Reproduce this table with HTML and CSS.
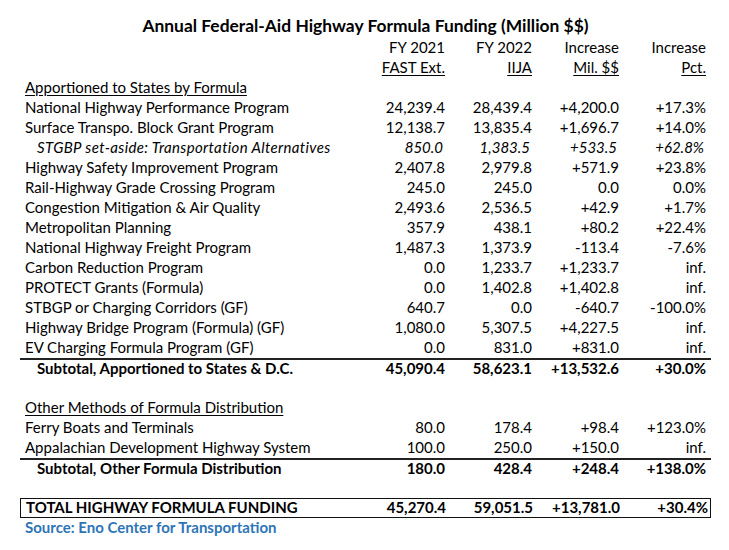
FILE: index.html
```html
<!DOCTYPE html>
<html>
<head>
<meta charset="utf-8">
<link rel="stylesheet" href="styles.css">
</head>
<body>
<div class="sheet">
  <div class="title">Annual Federal-Aid Highway Formula Funding (Million $$)</div>
  <div class="row head"><span></span><span>FY 2021</span><span>FY 2022</span><span>Increase</span><span>Increase</span></div>
  <div class="row head"><span></span><span class="u">FAST Ext.</span><span class="u">IIJA</span><span class="u">Mil. $$</span><span class="u">Pct.</span></div>
  <div class="row"><span class="lbl u">Apportioned to States by Formula</span></div>
  <div class="row"><span class="lbl">National Highway Performance Program</span><span>24,239.4</span><span>28,439.4</span><span>+4,200.0</span><span>+17.3%</span></div>
  <div class="row"><span class="lbl">Surface Transpo. Block Grant Program</span><span>12,138.7</span><span>13,835.4</span><span>+1,696.7</span><span>+14.0%</span></div>
  <div class="row ital"><span class="lbl ind">STGBP set-aside: Transportation Alternatives</span><span>850.0</span><span>1,383.5</span><span>+533.5</span><span>+62.8%</span></div>
  <div class="row"><span class="lbl">Highway Safety Improvement Program</span><span>2,407.8</span><span>2,979.8</span><span>+571.9</span><span>+23.8%</span></div>
  <div class="row"><span class="lbl">Rail-Highway Grade Crossing Program</span><span>245.0</span><span>245.0</span><span>0.0</span><span>0.0%</span></div>
  <div class="row"><span class="lbl">Congestion Mitigation &amp; Air Quality</span><span>2,493.6</span><span>2,536.5</span><span>+42.9</span><span>+1.7%</span></div>
  <div class="row"><span class="lbl">Metropolitan Planning</span><span>357.9</span><span>438.1</span><span>+80.2</span><span>+22.4%</span></div>
  <div class="row"><span class="lbl">National Highway Freight Program</span><span>1,487.3</span><span>1,373.9</span><span>-113.4</span><span>-7.6%</span></div>
  <div class="row"><span class="lbl">Carbon Reduction Program</span><span>0.0</span><span>1,233.7</span><span>+1,233.7</span><span>inf.</span></div>
  <div class="row"><span class="lbl">PROTECT Grants (Formula)</span><span>0.0</span><span>1,402.8</span><span>+1,402.8</span><span>inf.</span></div>
  <div class="row"><span class="lbl">STBGP or Charging Corridors (GF)</span><span>640.7</span><span>0.0</span><span>-640.7</span><span>-100.0%</span></div>
  <div class="row"><span class="lbl">Highway Bridge Program (Formula) (GF)</span><span>1,080.0</span><span>5,307.5</span><span>+4,227.5</span><span>inf.</span></div>
  <div class="row"><span class="lbl">EV Charging Formula Program (GF)</span><span>0.0</span><span>831.0</span><span>+831.0</span><span>inf.</span></div>
  <div class="row sub"><span class="lbl ind">Subtotal, Apportioned to States &amp; D.C.</span><span>45,090.4</span><span>58,623.1</span><span>+13,532.6</span><span>+30.0%</span></div>
  <div class="row"></div>
  <div class="row"><span class="lbl u">Other Methods of Formula Distribution</span></div>
  <div class="row"><span class="lbl">Ferry Boats and Terminals</span><span>80.0</span><span>178.4</span><span>+98.4</span><span>+123.0%</span></div>
  <div class="row"><span class="lbl">Appalachian Development Highway System</span><span>100.0</span><span>250.0</span><span>+150.0</span><span>inf.</span></div>
  <div class="row sub"><span class="lbl ind">Subtotal, Other Formula Distribution</span><span>180.0</span><span>428.4</span><span>+248.4</span><span>+138.0%</span></div>
  <div class="row"></div>
  <div class="row total"><span class="lbl">TOTAL HIGHWAY FORMULA FUNDING</span><span>45,270.4</span><span>59,051.5</span><span>+13,781.0</span><span>+30.4%</span></div>
  <div class="row source"><span class="lbl">Source: Eno Center for Transportation</span></div>
</div>
</body>
</html>
```

FILE: styles.css
```css
html, body {
  margin: 0;
  padding: 0;
  background: #fff;
}
body {
  font-family: Lato, "Open Sans", sans-serif;
  font-size: 15px;
  color: #000;
}
.sheet {
  width: 691px;
  margin-left: 20px;
}
.title {
  height: 38px;
  display: flex;
  align-items: flex-end;
  justify-content: center;
  font-size: 17.4px;
  font-weight: 700;
  line-height: 24px;
}
.row {
  display: grid;
  grid-template-columns: 343px repeat(4, 87px);
  height: 20px;
  line-height: 18px;
  padding-bottom: 2px;
  font-variant-numeric: tabular-nums;
  box-sizing: border-box;
}
.row > span {
  text-align: right;
  padding-right: 5px;
  white-space: nowrap;
}
.row > span.lbl {
  text-align: left;
  padding-left: 5px;
  padding-right: 0;
}
.row > span.ind {
  padding-left: 17px;
}
.u {
  text-decoration: underline;
  text-underline-offset: 2px;
}
.ital {
  font-style: italic;
}
.ital > span {
  padding-right: 7px;
}
.ital > span.lbl {
  padding-left: 17px;
  letter-spacing: 0.35px;
}
.sub {
  font-weight: 700;
  border-top: 2px solid #222;
  line-height: 17px;
  padding-bottom: 1px;
}
.total {
  font-weight: 700;
  border: 1.5px solid #111;
  line-height: 16px;
  padding-bottom: 1px;
}
.total > span:last-child {
  padding-right: 4px;
}
.source {
  font-weight: 700;
  color: #2e75b6;
}
```
